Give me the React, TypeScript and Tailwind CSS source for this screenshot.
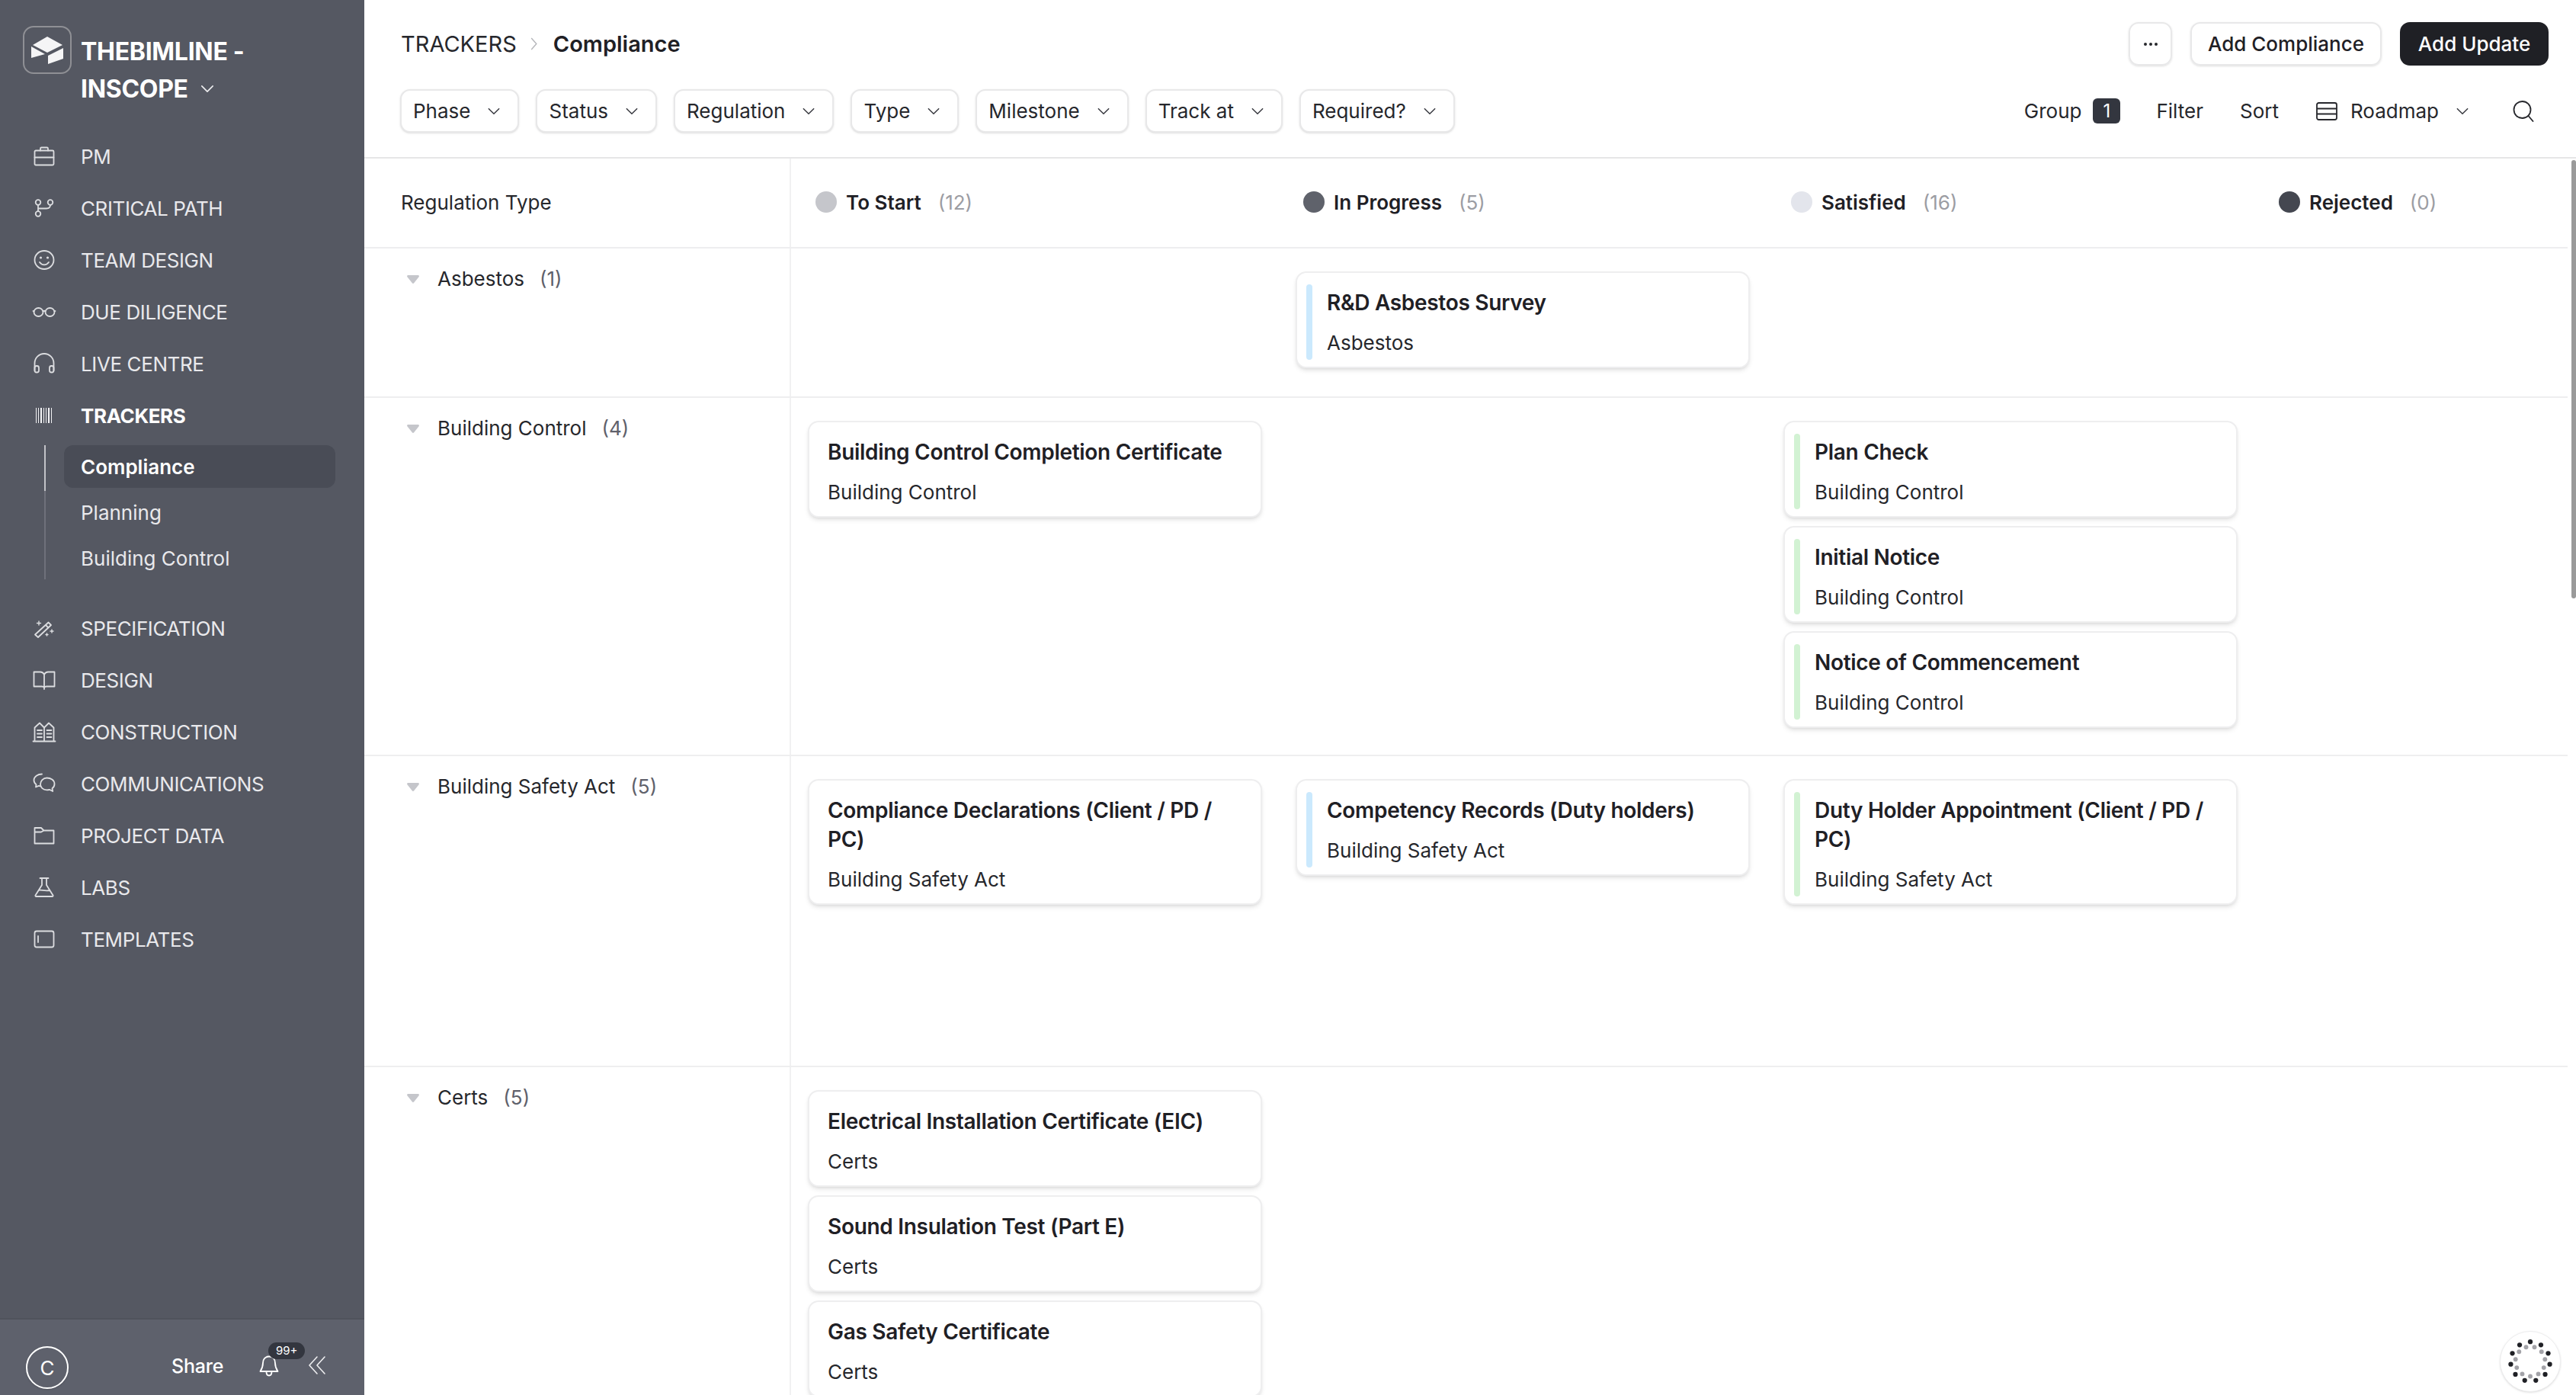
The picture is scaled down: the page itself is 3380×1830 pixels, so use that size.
import type { ReactNode } from 'react';

type Card = { title: string; sub: string; accent?: 'blue' | 'green' };
type Row = { name: string; count: number; height: string; cols: Card[][] };

const ICON_CLASS = 'w-[32px] h-[32px] shrink-0';

function Icon({ children }: { children: ReactNode }) {
  return (
    <svg viewBox="0 0 32 32" className={ICON_CLASS} fill="none" stroke="#dcdde0" strokeWidth="1.8" strokeLinecap="round" strokeLinejoin="round">
      {children}
    </svg>
  );
}

const TOP_NAV: { label: string; icon: ReactNode; bold?: boolean }[] = [
  {
    label: 'PM',
    icon: (
      <Icon>
        <rect x="3.5" y="8.5" width="25" height="19" rx="1.5" />
        <path d="M3.5 17.5h25M11 8.5V6a1.5 1.5 0 011.5-1.5h7A1.5 1.5 0 0121 6v2.5" />
      </Icon>
    ),
  },
  {
    label: 'CRITICAL PATH',
    icon: (
      <Icon>
        <circle cx="8" cy="8.5" r="3.3" />
        <circle cx="24" cy="8.5" r="3.3" />
        <circle cx="8" cy="23.5" r="3.3" />
        <path d="M8 12v8M24 12c0 3-2 4.5-5 4.5H8" />
      </Icon>
    ),
  },
  {
    label: 'TEAM DESIGN',
    icon: (
      <Icon>
        <ellipse cx="16" cy="16" rx="12.5" ry="12" />
        <circle cx="11.5" cy="13" r=".7" fill="#dcdde0" />
        <circle cx="20.5" cy="13" r=".7" fill="#dcdde0" />
        <path d="M10 19c1.5 2.3 3.6 3.3 6 3.3s4.5-1 6-3.3" />
      </Icon>
    ),
  },
  {
    label: 'DUE DILIGENCE',
    icon: (
      <Icon>
        <ellipse cx="8.5" cy="16.5" rx="6" ry="5.5" />
        <ellipse cx="23.5" cy="16.5" rx="6" ry="5.5" />
        <path d="M14.5 15.5c1-1 2-1 3 0M2.5 15.5L1.5 15M29.5 15.5l1-.5" />
      </Icon>
    ),
  },
  {
    label: 'LIVE CENTRE',
    icon: (
      <Icon>
        <path d="M3.5 25V15.5a12.5 12.5 0 0125 0V25" />
        <rect x="3.5" y="19" width="5.5" height="8.5" rx="2.5" />
        <rect x="23" y="19" width="5.5" height="8.5" rx="2.5" />
      </Icon>
    ),
  },
  {
    label: 'TRACKERS',
    bold: true,
    icon: (
      <svg viewBox="0 0 32 32" className={ICON_CLASS} fill="#f2f2f4">
        <rect x="5" y="6" width="1" height="20" />
        <rect x="8" y="6" width="1" height="20" />
        <rect x="11" y="6" width="2" height="20" />
        <rect x="15" y="6" width="1" height="20" />
        <rect x="18" y="6" width="1" height="20" />
        <rect x="21" y="6" width="2" height="20" />
        <rect x="25" y="6" width="1" height="20" />
      </svg>
    ),
  },
];

const BOTTOM_NAV: { label: string; icon: ReactNode }[] = [
  {
    label: 'SPECIFICATION',
    icon: (
      <Icon>
        <path d="M4 24.5L21.5 8.5l3.5 3.5L8 28zM18 12l3.5 3.5" />
        <path d="M9 7v5M6.5 9.5h5M26 18v4M24 20h4M19.5 23v3M18 24.5h3" strokeWidth="1.4" />
      </Icon>
    ),
  },
  {
    label: 'DESIGN',
    icon: (
      <Icon>
        <path d="M16 9C15 6.8 13.5 5.5 11 5.5H2.5V24.5H13c1.5 0 2.5.6 3 1.5.5-.9 1.5-1.500 3-1.500h10.5V5.5H21C18.500 5.500 17 6.800 16 9zM16 9v19" />
      </Icon>
    ),
  },
  {
    label: 'CONSTRUCTION',
    icon: (
      <Icon>
        <path d="M1.5 28.5h29M3.500 28V10.500l6.500-6 6 6 6-6 6.500 6V28M16 10.500V28" />
        <path d="M7 14h6M7 18.500h6M7 23h6M19.500 14h6M19.500 18.500h6M19.500 23h6" />
      </Icon>
    ),
  },
  {
    label: 'COMMUNICATIONS',
    icon: (
      <Icon>
        <path d="M13 3.500C7.500 3.500 2.500 7 2.500 11.500c0 2.300 1.200 4.300 3 5.700L5 20.500l3.800-1.600c.8.300 1.600.4 2.500.5" />
        <path d="M19.500 8.500c5 0 10 2.800 10 8 0 2.500-1.200 4.500-3 5.800l.7 3.700-4.400-2.200c-1 .3-2.200.5-3.300.5-5 0-8.500-3.300-8.500-7.500s3.500-8.300 8.500-8.300z" />
      </Icon>
    ),
  },
  {
    label: 'PROJECT DATA',
    icon: (
      <Icon>
        <path d="M3.500 6h8.500l3.500 3.500H28.500V26.500H3.500zM3.500 11.500H12l3.500-2" />
      </Icon>
    ),
  },
  {
    label: 'LABS',
    icon: (
      <Icon>
        <path d="M10.500 4h11M13 4v9L4.500 26.500c-.4.700.1 1.500.9 1.500h21.200c.8 0 1.300-.8.9-1.500L19 13V4M8.500 20c4-1.500 7 1.500 15 0" />
      </Icon>
    ),
  },
  {
    label: 'TEMPLATES',
    icon: (
      <Icon>
        <rect x="3.500" y="5.500" width="25" height="21" rx="2.500" />
        <path d="M8 12v8" />
      </Icon>
    ),
  },
];

const SUB_NAV = ['Compliance', 'Planning', 'Building Control'];
const FILTERS = ['Phase', 'Status', 'Regulation', 'Type', 'Milestone', 'Track at', 'Required?'];

const COLUMNS = [
  { label: 'To Start', count: 12, dot: 'bg-[#c5c6cb]' },
  { label: 'In Progress', count: 5, dot: 'bg-[#5f626b]' },
  { label: 'Satisfied', count: 16, dot: 'bg-[#e3e5ec]' },
  { label: 'Rejected', count: 0, dot: 'bg-[#444750]' },
];

const ROWS: Row[] = [
  {
    name: 'Asbestos',
    count: 1,
    height: 'h-[196px]',
    cols: [[], [{ title: 'R&D Asbestos Survey', sub: 'Asbestos', accent: 'blue' }], [], []],
  },
  {
    name: 'Building Control',
    count: 4,
    height: 'h-[470px]',
    cols: [
      [{ title: 'Building Control Completion Certificate', sub: 'Building Control' }],
      [],
      [
        { title: 'Plan Check', sub: 'Building Control', accent: 'green' },
        { title: 'Initial Notice', sub: 'Building Control', accent: 'green' },
        { title: 'Notice of Commencement', sub: 'Building Control', accent: 'green' },
      ],
      [],
    ],
  },
  {
    name: 'Building Safety Act',
    count: 5,
    height: 'h-[408px]',
    cols: [
      [{ title: 'Compliance Declarations (Client / PD / PC)', sub: 'Building Safety Act' }],
      [{ title: 'Competency Records (Duty holders)', sub: 'Building Safety Act', accent: 'blue' }],
      [{ title: 'Duty Holder Appointment (Client / PD / PC)', sub: 'Building Safety Act', accent: 'green' }],
      [],
    ],
  },
  {
    name: 'Certs',
    count: 5,
    height: 'h-[600px]',
    cols: [
      [
        { title: 'Electrical Installation Certificate (EIC)', sub: 'Certs' },
        { title: 'Sound Insulation Test (Part E)', sub: 'Certs' },
        { title: 'Gas Safety Certificate', sub: 'Certs' },
      ],
      [],
      [],
      [],
    ],
  },
];

function Chevron({ className }: { className: string }) {
  return (
    <svg viewBox="0 0 20 12" className={className} fill="none" stroke="currentColor" strokeWidth="1.8" strokeLinecap="round" strokeLinejoin="round">
      <path d="M2 2l8 8 8-8" />
    </svg>
  );
}

function NavItem({ label, icon, bold }: { label: string; icon: ReactNode; bold?: boolean }) {
  return (
    <div className="flex items-center h-[68px] pl-[42px] gap-[32px]">
      {icon}
      <span className={`text-[26px] tracking-[-0.4px] ${bold ? 'font-bold text-white' : 'text-[#e9e9ec]'}`}>{label}</span>
    </div>
  );
}

function Sidebar() {
  return (
    <aside className="w-[478px] h-full shrink-0 flex flex-col bg-[#555862]">
      <div className="h-[171px] pl-[30px] pt-[34px] flex items-start gap-[12px]">
        <div className="w-[64px] h-[63px] shrink-0 rounded-[14px] border-2 border-[#8f9095]">
          <svg viewBox="2 2 60 59" className="w-full h-full" fill="#f5f5f6">
            <path d="M32 14l20 11-20 10-19-10zM11 27l18 10-18 5zM33 39l20-10v14l-20 7z" />
          </svg>
        </div>
        <div className="text-[32px] leading-[49px] font-bold text-white tracking-[-0.3px] mt-[9px]">
          <div>THEBIMLINE -</div>
          <div className="flex items-center gap-[16px]">
            INSCOPE
            <Chevron className="w-[18px] h-[11px] text-[#eeeef0]" />
          </div>
        </div>
      </div>

      {TOP_NAV.map((n) => (
        <NavItem key={n.label} {...n} />
      ))}

      <div className="ml-[58px] mt-[5px] mb-[30px]">
        {SUB_NAV.map((s, i) => (
          <div key={s} className={`border-l-2 pl-[24px] ${i === 0 ? 'border-[#c2c3c8]' : 'border-[#6f717b]'} ${i === 2 ? '' : 'pb-[4px]'}`}>
            <div
              className={`w-[356px] h-[56px] pl-[22px] flex items-center rounded-[12px] text-[26px] ${
                i === 0 ? 'bg-[#494c56] font-semibold text-white' : 'text-[#e9e9ec]'
              }`}
            >
              {s}
            </div>
          </div>
        ))}
      </div>

      {BOTTOM_NAV.map((n) => (
        <NavItem key={n.label} {...n} />
      ))}

      <div className="mt-auto h-[101px] bg-[#5e616c] border-t-2 border-[#50535c] pl-[34px] pt-[35px] flex items-start">
        <div className="w-[56px] h-[56px] rounded-full border-2 border-white shadow flex items-center justify-center text-[26px] text-white shrink-0">
          C
        </div>
        <span className="ml-[135px] mt-[8px] text-[25px] font-medium tracking-[-0.2px] text-white">Share</span>
        <div className="relative ml-[47px] mt-[12px] w-[26px] h-[28px]">
          <svg viewBox="0 0 26 28" className="w-[26px] h-[28px]" fill="none" stroke="white" strokeWidth="1.8" strokeLinecap="round" strokeLinejoin="round">
            <path d="M13 1.500c-5 0-8 3.500-8 8.500 0 5-1.500 8-3.500 11h23c-2-3-3.500-6-3.500-11 0-5-3-8.500-8-8.500zM9.500 21.500c0 3 1.500 5 3.500 5s3.500-2 3.500-5" />
          </svg>
          <span className="absolute left-[12px] top-[-17px] w-[48px] h-[22px] rounded-full bg-[#33363f] text-white text-[15px] flex items-center justify-center">
            99+
          </span>
        </div>
        <svg viewBox="0 0 22 24" className="ml-[39px] mt-[13px] w-[22px] h-[24px]" fill="none" stroke="#eeeef0" strokeWidth="1.6" strokeLinecap="round" strokeLinejoin="round">
          <path d="M11 1L1 12l10 11M21 1L11 12l10 11" />
        </svg>
      </div>
    </aside>
  );
}

function FilterButton({ label }: { label: string }) {
  return (
    <button className="h-[57px] pl-[15px] pr-[22px] flex items-center gap-[22px] rounded-[13px] bg-white border-2 border-[#e8e8e9] shadow-sm text-[26px] text-[#26272c]">
      {label}
      <Chevron className="w-[18px] h-[10px] text-[#3a3b42]" />
    </button>
  );
}

function Header() {
  return (
    <header className="shrink-0 h-[208px] border-b-2 border-[#e6e6e7] pl-[48px] pr-[36px] pt-[29px]">
      <div className="flex items-center justify-between h-[57px]">
        <div className="flex items-center text-[29px] text-[#26272c]">
          <span>TRACKERS</span>
          <svg viewBox="0 0 10 18" className="w-[10px] h-[17px] ml-[18px] mr-[20px]" fill="none" stroke="#b5b6ba" strokeWidth="1.5">
            <path d="M1 1l7 8-7 8" />
          </svg>
          <span className="font-semibold text-[#1f2025]">Compliance</span>
        </div>
        <div className="flex items-center gap-[24px]">
          <button className="w-[57px] h-[57px] rounded-[13px] border-2 border-[#e8e8e9] shadow-sm flex items-center justify-center gap-[3px]">
            <span className="w-[4px] h-[4px] rounded-full bg-[#26272c]" />
            <span className="w-[4px] h-[4px] rounded-full bg-[#26272c]" />
            <span className="w-[4px] h-[4px] rounded-full bg-[#26272c]" />
          </button>
          <button className="w-[251px] h-[57px] rounded-[13px] border-2 border-[#e8e8e9] shadow-sm text-[26px] font-medium text-[#1f2025]">Add Compliance</button>
          <button className="w-[195px] h-[57px] rounded-[13px] bg-[#1f2025] text-[26px] font-medium text-white">Add Update</button>
        </div>
      </div>
      <div className="flex items-center justify-between h-[57px] mt-[31px]">
        <div className="flex items-center gap-[22px] -ml-[1px]">
          {FILTERS.map((f) => (
            <FilterButton key={f} label={f} />
          ))}
        </div>
        <div className="flex items-center text-[26px] text-[#26272c] pr-[19px]">
          <span>Group</span>
          <span className="ml-[15px] w-[36px] h-[33px] rounded-[6px] bg-[#33363f] text-white text-[24px] flex items-center justify-center">1</span>
          <span className="ml-[47px]">Filter</span>
          <span className="ml-[48px]">Sort</span>
          <svg viewBox="0 0 28 24" className="ml-[49px] w-[28px] h-[24px]" fill="none" stroke="#26272c" strokeWidth="1.8">
            <rect x="1" y="1" width="26" height="22" rx="2.500" />
            <path d="M1 8.500h26M1 15.500h26" />
          </svg>
          <span className="ml-[17px]">Roadmap</span>
          <Chevron className="ml-[22px] w-[18px] h-[10px] text-[#3a3b42]" />
          <svg viewBox="0 0 28 28" className="ml-[57px] w-[28px] h-[28px]" fill="none" stroke="#26272c" strokeWidth="1.8" strokeLinecap="round">
            <ellipse cx="12.500" cy="12" rx="11" ry="11" />
            <path d="M20.500 20l6 7" />
          </svg>
        </div>
      </div>
    </header>
  );
}

function TrackerCard({ card }: { card: Card }) {
  return (
    <div className="w-[596px] flex rounded-[14px] bg-white border-2 border-[#eeeeef] shadow-md pl-[24px] pr-[20px] pt-[20px] pb-[14px]">
      {card.accent && (
        <div
          className={`w-[8px] mr-[19px] -ml-[12px] my-[-5px] shrink-0 rounded-full ${
            card.accent === 'blue' ? 'bg-[#cbe9fd]' : 'bg-[#d2f2d3]'
          }`}
        />
      )}
      <div className="min-w-0">
        <div className="text-[28px] leading-[38px] font-semibold tracking-[-0.3px] text-[#1f2025]">{card.title}</div>
        <div className="mt-[17px] text-[26px] leading-[34px] text-[#26272c]">{card.sub}</div>
      </div>
    </div>
  );
}

function BoardRow({ row }: { row: Row }) {
  return (
    <div className={`flex shrink-0 border-b-2 border-[#eeeeef] ${row.height}`}>
      <div className="w-[560px] shrink-0 border-r-2 border-[#f1f1f2] pl-[56px] pt-[23px] flex items-start text-[26px] leading-[34px] text-[#26272c]">
        <svg viewBox="0 0 16 11" className="w-[16px] h-[11px] mt-[12px] mr-[24px] shrink-0" fill="#c5c6cb">
          <path d="M1.500 0h13c1.200 0 1.800 1.200 1.100 2.200L9.200 10.300c-.6.900-1.800.900-2.400 0L.4 2.200C-.3 1.200.3 0 1.500 0z" />
        </svg>
        <span>{row.name}</span>
        <span className="ml-[20px] text-[#5f616b]">({row.count})</span>
      </div>
      {row.cols.map((col, i) => (
        <div key={i} className="w-[640px] shrink-0 pl-[22px] pt-[30px] flex flex-col gap-[11px]">
          {col.map((c) => (
            <TrackerCard key={c.title} card={c} />
          ))}
        </div>
      ))}
    </div>
  );
}

function Spinner() {
  const outer = Array.from({ length: 11 }, (_, i) => {
    const a = (i / 11) * Math.PI * 2 - Math.PI / 2;
    return { x: 40 + 26.5 * Math.cos(a), y: 40 + 26.5 * Math.sin(a) };
  });
  const inner = Array.from({ length: 11 }, (_, i) => {
    const a = (i / 11) * Math.PI * 2 + Math.PI / 2;
    return { x: 40 + 20 * Math.cos(a), y: 40 + 20 * Math.sin(a) };
  });
  return (
    <div className="absolute right-[20px] bottom-[4px] w-[80px] h-[80px] rounded-full bg-white border border-[#eeeeef] shadow">
      <svg viewBox="0 0 80 80" className="w-full h-full">
        {outer.map((d, i) => (
          <circle key={i} cx={d.x} cy={d.y} r="3.2" fill="#1f2025" />
        ))}
        {inner.map((d, i) => (
          <circle key={i} cx={d.x} cy={d.y} r="3" fill="#a3a3a8" />
        ))}
      </svg>
    </div>
  );
}

export default function App() {
  return (
    <div className="w-screen h-screen flex overflow-hidden bg-white font-['Inter',sans-serif]">
      <Sidebar />
      <main className="relative flex-1 min-w-0 h-full flex flex-col overflow-hidden">
        <Header />
        <div className="flex-1 min-h-0 overflow-hidden pr-[11px]">
          <div className="flex shrink-0 h-[118px] border-b-2 border-[#eeeeef]">
            <div className="w-[560px] shrink-0 border-r-2 border-[#f1f1f2] pl-[48px] pb-[2px] flex items-center text-[26px] text-[#26272c]">Regulation Type</div>
            {COLUMNS.map((c) => (
              <div key={c.label} className="w-[640px] shrink-0 pl-[32px] pb-[2px] flex items-center text-[26px]">
                <span className={`w-[28px] h-[28px] rounded-full ${c.dot}`} />
                <span className="ml-[12px] font-semibold text-[#1f2025]">{c.label}</span>
                <span className="ml-[22px] text-[#9c9da3]">({c.count})</span>
              </div>
            ))}
          </div>
          {ROWS.map((r) => (
            <BoardRow key={r.name} row={r} />
          ))}
        </div>
        <div className="absolute right-0 top-[210px] w-[6px] h-[575px] rounded-full bg-[#9a9a9a]" />
        <Spinner />
      </main>
    </div>
  );
}
